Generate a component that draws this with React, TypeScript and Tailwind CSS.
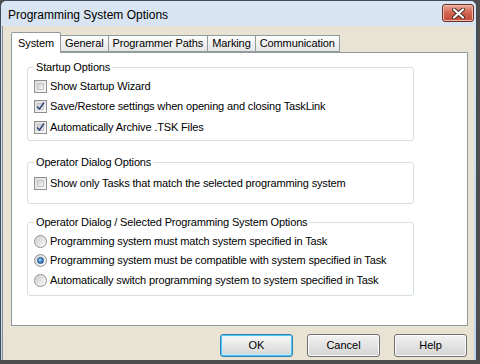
import React from "react";

const font = { fontFamily: '"Liberation Sans", Arial, sans-serif' };

function Checkbox({ checked }: { checked?: boolean }) {
  return (
    <div className="w-[13px] h-[13px] border border-[#8e8f8f] bg-gradient-to-br from-[#dcdcdc] to-[#fbfbfb] p-[2px] shrink-0">
      <div className="w-full h-full border border-[#c5c5c5] bg-gradient-to-br from-[#cbcfd5] to-[#f6f6f6] flex items-center justify-center">
        {checked && (
          <svg width="9" height="9" viewBox="0 0 9 9" className="overflow-visible">
            <path d="M1 4.5 L3.5 7 L8 0.5" fill="none" stroke="#3d4f7d" strokeWidth="1.7" />
          </svg>
        )}
      </div>
    </div>
  );
}

function Radio({ checked }: { checked?: boolean }) {
  return (
    <div className="w-[13px] h-[13px] rounded-full border border-[#8e8f8f] bg-gradient-to-br from-[#d6d6d6] to-[#fbfbfb] flex items-center justify-center shrink-0">
      {checked ? (
        <div className="w-[7px] h-[7px] rounded-full bg-[radial-gradient(circle_at_35%_35%,#9fd7ff,#2a6fbf_70%,#1b4f8f)] border border-[#1d4f86]" />
      ) : (
        <div className="w-[9px] h-[9px] rounded-full bg-gradient-to-br from-[#cbcfd5] to-[#f6f6f6]" />
      )}
    </div>
  );
}

function Group({
  title,
  children,
  className,
}: {
  title: string;
  children: React.ReactNode;
  className?: string;
}) {
  return (
    <div className={"relative border border-[#d5dfe5] rounded-[3px] ml-[15px] w-[387px] " + (className || "")}>
      <div className="absolute left-[6px] top-[-7px] bg-white px-[2px] leading-[13px] text-[11px] text-black tracking-[-0.15px]">
        {title}
      </div>
      {children}
    </div>
  );
}

function Row({ children, h }: { children: React.ReactNode; h: string }) {
  return (
    <div className={"flex items-center gap-[3px] pl-[6px] text-[11px] text-black tracking-[-0.15px] " + h}>
      {children}
    </div>
  );
}

function Tab({ label, selected }: { label: string; selected?: boolean }) {
  if (selected) {
    return (
      <div className="h-[21px] px-[6px] bg-white border border-b-0 border-[#919b9c] rounded-t-[2px] flex items-center text-[11px] text-black relative top-[1px] z-10 self-end -mr-[1px] tracking-[-0.1px]">
        {label}
      </div>
    );
  }
  return (
    <div className="h-[17px] px-[4px] bg-gradient-to-b from-[#fdfdfd] to-[#e5e5e5] border border-[#919b9c] flex items-center text-[11px] text-black self-end -mr-[1px] tracking-[-0.1px]">
      {label}
    </div>
  );
}

function Button({ label, focused }: { label: string; focused?: boolean }) {
  return (
    <div
      className={
        "w-[73px] h-[23px] rounded-[3px] border flex items-center justify-center text-[11px] text-black " +
        (focused
          ? "border-[#3c7fb1] bg-gradient-to-b from-[#eaf6fd] to-[#bee6fd] shadow-[inset_0_0_0_1px_#48c7f5]"
          : "border-[#707070] bg-gradient-to-b from-[#f2f2f2] to-[#d4d4d4] shadow-[inset_0_0_0_1px_#fcfcfc]")
      }
    >
      <div className={focused ? "w-[67px] h-[17px] rounded-[2px] bg-gradient-to-b from-[#f6f6f6] to-[#d8d8d8] flex items-center justify-center" : ""}>
        {label}
      </div>
    </div>
  );
}

export default function App() {
  return (
    <div className="w-[480px] h-[364px] bg-[#4e4e4e] overflow-hidden" style={font}>
      <div className="w-[477px] h-[360px] border-l border-t border-r border-[#3f4c5c] rounded-tl-[6px] rounded-tr-[6px] bg-gradient-to-b from-[#d9e5f2] to-[#c2d5ea] flex flex-col">
        {/* title bar */}
        <div className="h-[25px] flex items-center justify-between pl-[7px] pr-[2px] shrink-0">
          <div className="text-[12px] text-black mt-[2px]">Programming System Options</div>
          <div className="w-[32px] h-[18px] mt-[-1px] rounded-[3px] border border-[#6b2f26] bg-gradient-to-b from-[#e9a99b] via-[#d0634e] to-[#c44c36] flex items-center justify-center shadow-[inset_0_0_0_1px_#f0b8aa]">
            <svg width="13" height="11" viewBox="0 0 13 11">
              <path d="M2 1.5 L11 9.5 M11 1.5 L2 9.5" stroke="#4a2a25" strokeWidth="4" strokeLinecap="round" />
              <path d="M2 1.5 L11 9.5 M11 1.5 L2 9.5" stroke="#ffffff" strokeWidth="2.2" strokeLinecap="round" />
            </svg>
          </div>
        </div>
        {/* body */}
        <div className="flex-1 ml-[1px] mr-[2px] bg-[#e8e3d3] border-l border-[#8a8f95] flex flex-col">
          <div className="ml-[8px] mr-[6px] mt-[6px]">
            <div className="flex h-[20px] items-end">
              <Tab label="System" selected />
              <Tab label="General" />
              <Tab label="Programmer Paths" />
              <Tab label="Marking" />
              <Tab label="Communication" />
            </div>
            <div className="h-[274px] bg-white border border-[#919b9c] pt-[14px]">
              <Group title="Startup Options" className="h-[74px] pt-[8px]">
                <Row h="h-[20px]">
                  <Checkbox />
                  <span>Show Startup Wizard</span>
                </Row>
                <Row h="h-[21px]">
                  <Checkbox checked />
                  <span>Save/Restore settings when opening and closing TaskLink</span>
                </Row>
                <Row h="h-[20px]">
                  <Checkbox checked />
                  <span>Automatically Archive .TSK Files</span>
                </Row>
              </Group>
              <Group title="Operator Dialog Options" className="h-[42px] mt-[21px] pt-[10px]">
                <Row h="h-[20px]">
                  <Checkbox />
                  <span>Show only Tasks that match the selected programming system</span>
                </Row>
              </Group>
              <Group title="Operator Dialog / Selected Programming System Options" className="h-[74px] mt-[18px] pt-[9px]">
                <Row h="h-[19px]">
                  <Radio />
                  <span>Programming system must match system specified in Task</span>
                </Row>
                <Row h="h-[18px]">
                  <Radio checked />
                  <span>Programming system must be compatible with system specified in Task</span>
                </Row>
                <Row h="h-[22px]">
                  <Radio />
                  <span>Automatically switch programming system to system specified in Task</span>
                </Row>
              </Group>
            </div>
          </div>
          <div className="flex justify-end gap-[14px] mr-[7px] mt-[8px]">
            <Button label="OK" focused />
            <Button label="Cancel" />
            <Button label="Help" />
          </div>
        </div>
      </div>
    </div>
  );
}
